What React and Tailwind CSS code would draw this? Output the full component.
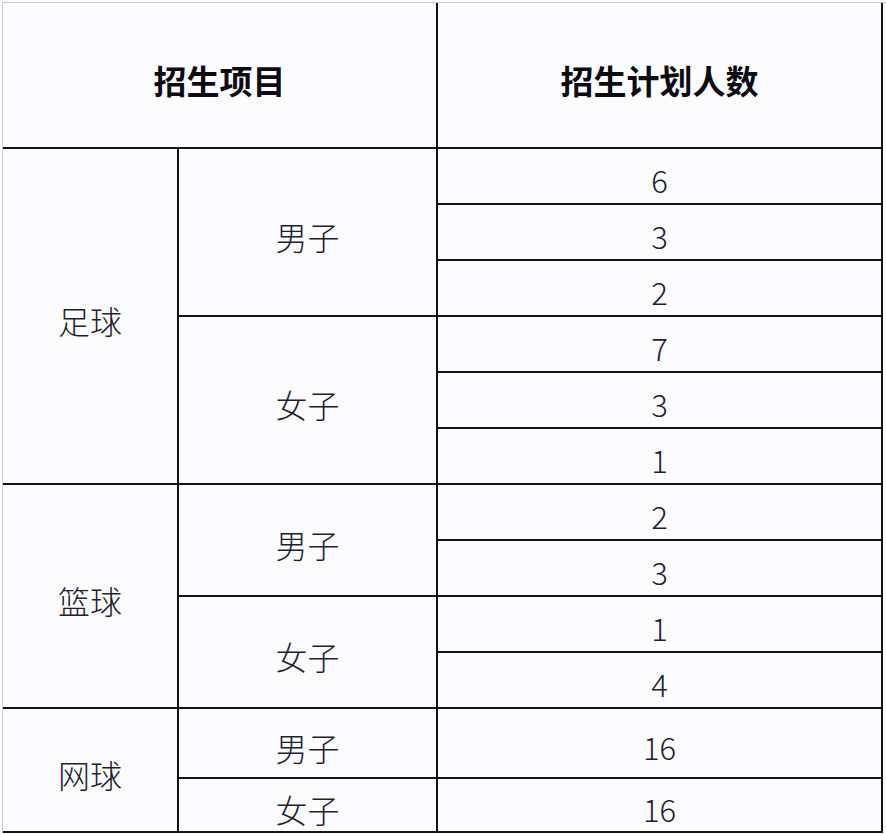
import React from 'react'

const font = { fontFamily: '"Noto Sans CJK SC", "Noto Sans", sans-serif' }

function Cell({ children, className = '' }) {
  return (
    <div
      className={`flex items-center justify-center border-r-2 border-b-2 border-[#141220] text-[#231d30] font-light ${className}`}
    >
      {children}
    </div>
  )
}

const Text = ({ children }) => <span className="pt-[8px] text-[32px] leading-none">{children}</span>
const Num = ({ children }) => <span className="pt-[6px] text-[31px] leading-none">{children}</span>

export default function App() {
  return (
    <div className="w-[886px] h-[834px] overflow-hidden bg-[#fcfcfe] pt-[2px] pl-[2px]" style={font}>
      <div className="border-t border-l border-[#c9c7d0] grid grid-cols-[176px_259px_445px] grid-rows-[146px_repeat(10,56px)_70px_54px]">
        <Cell className="col-span-2 font-bold">
          <span className="pt-[10px] text-[33px] leading-none font-bold text-[#0d0b14]">招生项目</span>
        </Cell>
        <Cell>
          <span className="pt-[10px] text-[33px] leading-none font-bold text-[#0d0b14]">招生计划人数</span>
        </Cell>

        <Cell className="row-span-6"><Text>足球</Text></Cell>
        <Cell className="row-span-3"><Text>男子</Text></Cell>
        <Cell><Num>6</Num></Cell>
        <Cell><Num>3</Num></Cell>
        <Cell><Num>2</Num></Cell>
        <Cell className="row-span-3"><Text>女子</Text></Cell>
        <Cell><Num>7</Num></Cell>
        <Cell><Num>3</Num></Cell>
        <Cell><Num>1</Num></Cell>

        <Cell className="row-span-4"><Text>篮球</Text></Cell>
        <Cell className="row-span-2"><Text>男子</Text></Cell>
        <Cell><Num>2</Num></Cell>
        <Cell><Num>3</Num></Cell>
        <Cell className="row-span-2"><Text>女子</Text></Cell>
        <Cell><Num>1</Num></Cell>
        <Cell><Num>4</Num></Cell>

        <Cell className="row-span-2"><Text>网球</Text></Cell>
        <Cell><Text>男子</Text></Cell>
        <Cell><Num>16</Num></Cell>
        <Cell><Text>女子</Text></Cell>
        <Cell><Num>16</Num></Cell>
      </div>
    </div>
  )
}
